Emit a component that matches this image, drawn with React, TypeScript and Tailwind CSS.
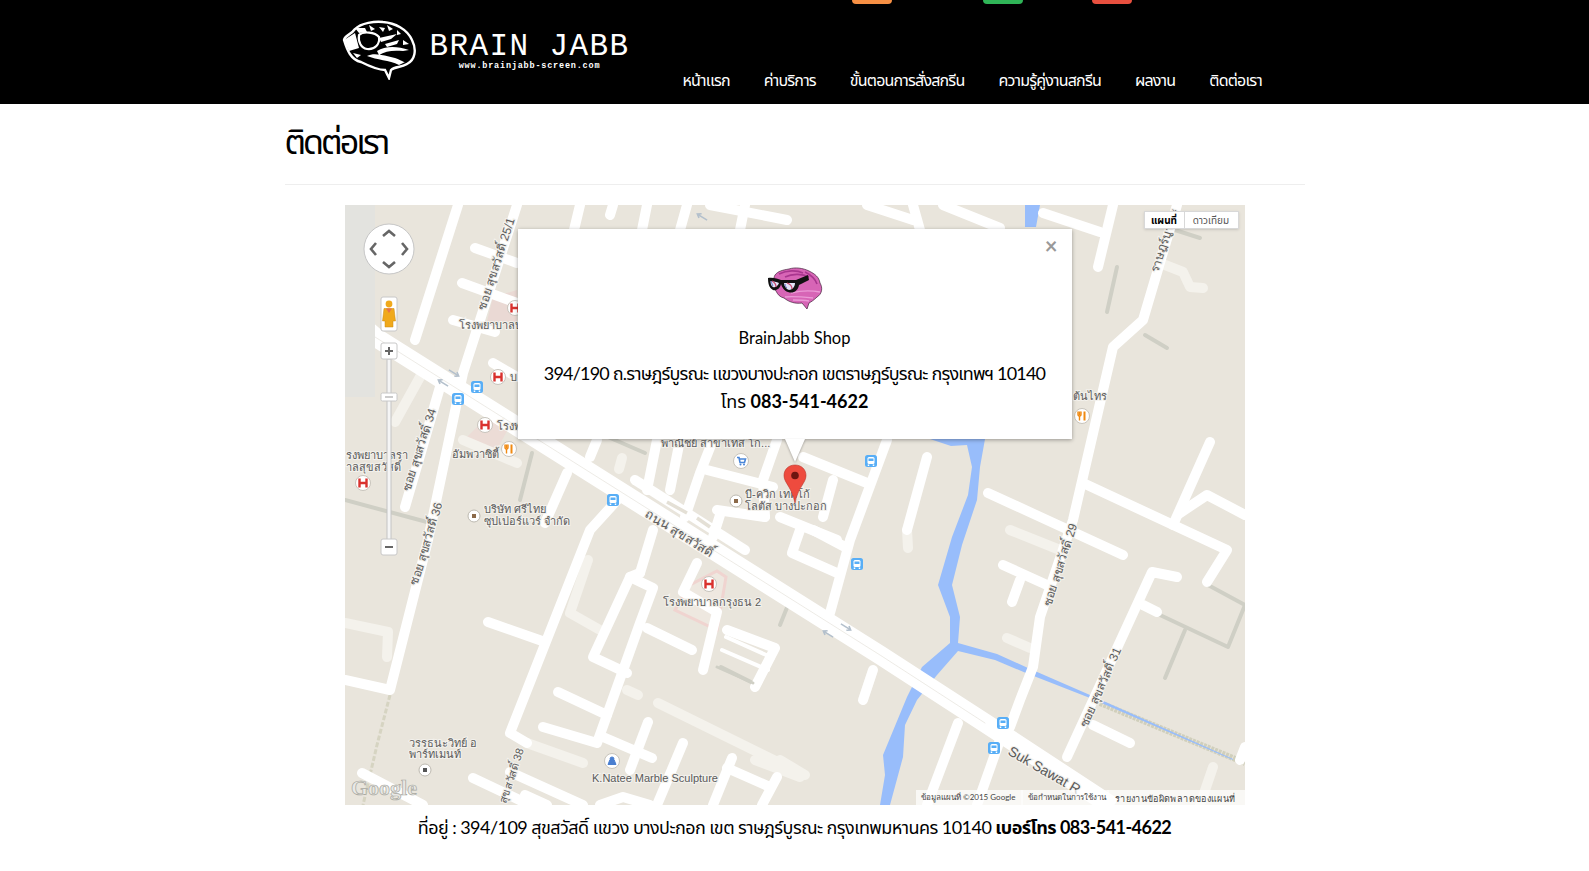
const UI = "font-['Lato','Noto_Sans','Noto_Sans_Thai','Liberation_Sans',sans-serif]";
const LABEL = "'Liberation Sans','DejaVu Sans','Noto Sans',sans-serif";
const UIF = "Lato,'Noto Sans',sans-serif";

type Line = [number, number][];
const toPts = (l: Line) => l.map((p) => p.join(",")).join(" ");

const whiteRoads: Line[] = [
  [[113, 0], [70, 135]],
  [[172, 0], [118, 168], [83, 335], [45, 485], [0, 475]],
  [[95, 182], [60, 302]],
  [[130, 43], [172, 58]],
  [[117, 78], [172, 98]],
  [[108, 115], [150, 127]],
  [[148, 158], [172, 172]],
  [[235, 0], [229, 25]],
  [[268, 0], [265, 10]],
  [[302, 0], [297, 25]],
  [[342, 0], [335, 25]],
  [[400, 0], [395, 25]],
  [[365, 0], [442, 15]],
  [[522, 0], [568, 15]],
  [[598, 0], [655, 23]],
  [[568, 0], [575, 25]],
  [[222, 268], [200, 318]],
  [[275, 292], [245, 325], [165, 528], [182, 538]],
  [[252, 235], [245, 252]],
  [[312, 235], [302, 285]],
  [[335, 235], [325, 285]],
  [[368, 235], [355, 268], [340, 312]],
  [[362, 265], [428, 282]],
  [[432, 235], [418, 275], [420, 312]],
  [[372, 305], [420, 312]],
  [[375, 310], [368, 332]],
  [[290, 275], [400, 345]],
  [[143, 417], [200, 437]],
  [[308, 325], [295, 368]],
  [[295, 368], [285, 372], [248, 452], [282, 468]],
  [[285, 372], [308, 383], [295, 418], [252, 538], [198, 522]],
  [[302, 423], [347, 445]],
  [[213, 487], [262, 510]],
  [[258, 532], [307, 553]],
  [[303, 517], [285, 565]],
  [[338, 538], [312, 600]],
  [[387, 553], [368, 600]],
  [[382, 563], [425, 582]],
  [[432, 572], [417, 600]],
  [[17, 568], [78, 600]],
  [[128, 573], [185, 600]],
  [[165, 567], [238, 600]],
  [[180, 590], [202, 600]],
  [[255, 600], [278, 592], [305, 600]],
  [[352, 358], [338, 387], [372, 407], [358, 465]],
  [[382, 425], [430, 443], [410, 482]],
  [[458, 252], [522, 278]],
  [[542, 235], [505, 335], [485, 408]],
  [[488, 275], [478, 312]],
  [[435, 312], [492, 335]],
  [[582, 252], [562, 325]],
  [[455, 325], [447, 348], [492, 368]],
  [[468, 325], [500, 342]],
  [[528, 465], [518, 495]],
  [[613, 518], [582, 600]],
  [[655, 535], [632, 600]],
  [[768, 0], [753, 62]],
  [[832, 0], [798, 115], [768, 142], [728, 315], [695, 412], [688, 462], [675, 495], [665, 522]],
  [[698, 8], [755, 27]],
  [[643, 288], [778, 350]],
  [[738, 278], [882, 345], [862, 377]],
  [[865, 237], [828, 320]],
  [[835, 308], [862, 290], [900, 310]],
  [[658, 360], [702, 380]],
  [[675, 375], [667, 397]],
  [[832, 372], [807, 367], [722, 552]],
  [[798, 400], [812, 407]],
  [[748, 520], [785, 538]],
  [[895, 555], [900, 542]],
];

const creamRoads: Line[] = [
  [[0, 418], [43, 427], [42, 452]],
  [[75, 172], [50, 217]],
  [[118, 235], [172, 258]],
  [[182, 538], [238, 558]],
  [[282, 485], [293, 490]],
  [[313, 498], [455, 568]],
  [[410, 555], [455, 572]],
  [[243, 355], [225, 408], [255, 425]],
  [[277, 253], [274, 264]],
  [[435, 555], [460, 570]],
  [[665, 325], [715, 345]],
  [[662, 433], [685, 443]],
  [[868, 562], [855, 600]],
  [[815, 58], [838, 67], [845, 82], [858, 83]],
  [[562, 325], [563, 343]],
];

const greyPaths: Line[] = [
  [[187, 248], [175, 295]],
  [[0, 295], [82, 317]],
  [[263, 232], [300, 248]],
  [[772, 62], [762, 107]],
  [[800, 130], [822, 143]],
  [[830, 25], [855, 33]],
  [[863, 380], [900, 400], [883, 442], [815, 410]],
  [[840, 425], [820, 473]],
  [[376, 462], [408, 478]],
  [[443, 400], [435, 420]],
];

function HMark({ x, y }: { x: number; y: number }) {
  return (
    <g transform={`translate(${x} ${y})`}>
      <circle r="7.5" fill="#fff" stroke="#c8c4bc" />
      <path d="M-3.5-4.5V4.5M3.5-4.5V4.5M-3.5 0H3.5" stroke="#d9322e" strokeWidth="2.4" fill="none" />
    </g>
  );
}

function Bus({ x, y }: { x: number; y: number }) {
  return (
    <g transform={`translate(${x} ${y})`}>
      <rect x="-6" y="-6" width="12" height="12" rx="2.5" fill="#58aef6" />
      <rect x="-3.5" y="-4" width="7" height="7" rx="1.5" fill="#fff" />
      <rect x="-2.5" y="-2.5" width="5" height="2.5" fill="#58aef6" />
      <path d="M-2.5 3.5V5M2.5 3.5V5" stroke="#fff" strokeWidth="1.5" />
    </g>
  );
}

function Fork({ x, y }: { x: number; y: number }) {
  return (
    <g transform={`translate(${x} ${y})`}>
      <circle r="7.5" fill="#fff" stroke="#c8c4bc" />
      <path d="M-2.5-4.5V-1M2.5-4.5V4.5" stroke="#f08a12" strokeWidth="2" fill="none" />
      <path d="M-4-4.5V-1.5C-4 0-2.5 0-2.5 0V4.5M-1-4.5V-1.5C-1 0-2.5 0-2.5 0" stroke="#f08a12" strokeWidth="1.4" fill="none" />
    </g>
  );
}

function Dot({ x, y, c = "#8b6a4a" }: { x: number; y: number; c?: string }) {
  return (
    <g transform={`translate(${x} ${y})`}>
      <circle r="6" fill="#fff" stroke="#bdb9b0" />
      <rect x="-2" y="-2" width="4" height="4" fill={c} />
    </g>
  );
}

function Arrow({ x, y, flip }: { x: number; y: number; flip?: boolean }) {
  return (
    <path
      transform={`translate(${x} ${y}) rotate(${flip ? 212 : 32})`}
      d="M-6 0H5M2-2.5 5.5 0 2 2.5"
      stroke="#b4c0cc"
      strokeWidth="1.6"
      fill="none"
    />
  );
}

function Label({ x, y, children, rot, size = 11, anchor = "start", fam = LABEL }: { x: number; y: number; children: string; rot?: number; size?: number; anchor?: "start" | "middle"; fam?: string }) {
  return (
    <text
      x={x}
      y={y}
      transform={rot !== undefined ? `rotate(${rot} ${x} ${y})` : undefined}
      fontSize={size}
      textAnchor={anchor}
      fill="#5a5a5a"
      stroke="#f3f1ec"
      strokeWidth="2.2"
      paintOrder="stroke"
      fontFamily={fam}
    >
      {children}
    </text>
  );
}

function MapDrawing() {
  return (
    <svg viewBox="0 0 900 600" className="block h-[600px] w-[900px]">
      <rect width="900" height="600" fill="#e9e5dc" />
      {/* water */}
      <path d="M755 498 820 525 900 558" stroke="#d0cfbb" strokeWidth="6" strokeDasharray="3 1" fill="none" />
      <path
        d="M680 0H695L691 22H680ZM585 234 606 241 622 240 627 262 623 290 607 332 593 380 605 412 605 438 577 462 562 492 538 550 540 570 535 600H545L558 552 560 520 572 495 592 470 613 446 650 455 681 468 745 493 888 555 888 554 745 490 683 463 652 449 613 438 615 412 607 380 617 340 632 295 635 262 640 234Z"
        fill="#98bdfb"
      />
      <path d="M45 490 32 540 18 600" stroke="#d6d4c2" strokeWidth="3" strokeDasharray="5 2" fill="none" />
      {/* hospital grounds */}
      <path d="M148 92 172 85V122L142 116Z" fill="#ead9d4" />
      <path d="M122 232 142 212 162 226 150 248Z" fill="#ecdcd6" />
      <path d="M372 366 381 372 372 425 330 405 345 380Z" fill="#eee8e0" stroke="#f0d4d0" strokeWidth="3" />
      <g fill="none" strokeLinecap="round" strokeLinejoin="round">
        {greyPaths.map((l, i) => (
          <polyline key={i} points={toPts(l)} stroke="#cfcfc5" strokeWidth="4" />
        ))}
        {creamRoads.map((l, i) => (
          <polyline key={i} points={toPts(l)} stroke="#f4f2ec" strokeWidth="10" />
        ))}
        {whiteRoads.map((l, i) => (
          <polyline key={i} points={toPts(l)} stroke="#fff" strokeWidth="10" />
        ))}
        {/* thin lanes near the hospital */}
        <path d="M381 432 428 453M377 445 423 465" stroke="#fff" strokeWidth="4" />
        <path d="M372 462 408 478" stroke="#cfcfc5" strokeWidth="3" />
        <polyline points="0,106 30,132 535,450 640,518 768,602" stroke="#fff" strokeWidth="19" strokeLinecap="butt" />
        <polyline points="30,132 535,450 640,518" stroke="#e9e6df" strokeWidth="0.8" />
        <path d="M322 297 342 308M352 313 365 322" stroke="#e4e0d6" strokeWidth="3.5" strokeLinecap="butt" />
      </g>
      {/* left strip */}
      <rect width="30" height="192" fill="#e3e3df" />

      <Arrow x={109} y={168} />
      <Arrow x={98} y={178} flip />
      <Arrow x={501} y={422} />
      <Arrow x={483} y={429} flip />
      <Arrow x={357} y={12} flip />

      <Label x={114} y={124}>โรงพยาบาลบ</Label>
      <Label x={155} y={60} rot={-72} anchor="middle" size={12}>ซอย สุขสวัสดิ์ 25/1</Label>
      <Label x={78} y={246} rot={-72} anchor="middle" size={12}>ซอย สุขสวัสดิ์ 34</Label>
      <Label x={85} y={340} rot={-73} anchor="middle" size={12}>ซอย สุขสวัสดิ์ 36</Label>
      <Label x={170} y={572} rot={-72} anchor="middle" size={11}>สุขสวัสดิ์ 38</Label>
      <Label x={719} y={361} rot={-72} anchor="middle" size={12}>ซอย สุขสวัสดิ์ 29</Label>
      <Label x={759} y={484} rot={-66} anchor="middle" size={12}>ซอย สุขสวัสดิ์ 31</Label>
      <Label x={823} y={37} rot={-72} anchor="middle" size={12}>ราษฎร์บูรณะ</Label>
      <Label x={332} y={332} rot={32} anchor="middle" size={13}>ถนน สุขสวัสดิ์</Label>
      <Label x={662} y={549} rot={30} size={14}>Suk Sawat R</Label>
      <Label x={107} y={253}>อัมพวาซิตี้</Label>
      <Label x={1} y={254}>รงพยาบาลรา</Label>
      <Label x={1} y={266}>าลสุขสวัสดิ์</Label>
      <Label x={152} y={225}>โรงพ</Label>
      <Label x={165} y={176}>บ</Label>
      <Label x={139} y={308}>บริษัท ศรีไทย</Label>
      <Label x={139} y={320}>ซุปเปอร์แวร์ จำกัด</Label>
      <Label x={400} y={293}>บี-ควิก เทคโก้</Label>
      <Label x={400} y={305}>โลตัส บางปะกอก</Label>
      <Label x={316} y={242}>พาณิชย์ สาขาเทส โก...</Label>
      <Label x={318} y={401}>โรงพยาบาลกรุงธน 2</Label>
      <Label x={247} y={577} size={11}>K.Natee Marble Sculpture</Label>
      <Label x={64} y={542}>วรรธนะวิทย์ อ</Label>
      <Label x={64} y={553}>พาร์ทเมนท์</Label>
      <Label x={728} y={195}>ต้นไทร</Label>

      <HMark x={170} y={103} />
      <HMark x={153} y={172} />
      <HMark x={140} y={220} />
      <HMark x={18} y={278} />
      <HMark x={364} y={379} />
      <Fork x={164} y={244} />
      <Fork x={737} y={211} />
      <Bus x={132} y={182} />
      <Bus x={113} y={194} />
      <Bus x={268} y={295} />
      <Bus x={526} y={256} />
      <Bus x={512} y={359} />
      <Bus x={658} y={518} />
      <Bus x={649} y={543} />
      <Dot x={129} y={311} />
      <Dot x={391} y={296} />
      <Dot x={80} y={565} c="#555" />
      <g transform="translate(396 256)">
        <circle r="7.5" fill="#fff" stroke="#c8c4bc" />
        <path d="M-4-3.5H-2L-1 1.5H3.5L4.5-2H-1.5" stroke="#4a86d8" strokeWidth="1.6" fill="none" />
        <circle cx="-0.5" cy="3.5" r="1" fill="#4a86d8" />
        <circle cx="3" cy="3.5" r="1" fill="#4a86d8" />
      </g>
      <g transform="translate(267 556)">
        <circle r="7.5" fill="#fff" stroke="#c8c4bc" />
        <path d="M-4 3.5H4L2-1.5H-2ZM-2-2A2 2 0 0 1 2-2" fill="#4a7fd0" stroke="#4a7fd0" />
      </g>
      {/* pin */}
      <g transform="translate(439 260)">
        <path d="M11 0C4.5 0 0 4.5 0 10.5C0 18 8 22 11 38C14 22 22 18 22 10.5C22 4.5 17.5 0 11 0Z" fill="#ee4b3e" stroke="#b8362c" strokeWidth="0.6" />
        <circle cx="11" cy="10.5" r="3.8" fill="#6e1510" />
      </g>
      <text x="6" y="590" fontSize="22" fontWeight="700" fill="#e9e9e6" stroke="#a8a8a0" strokeWidth="0.7" fontFamily="'Liberation Serif',serif">Google</text>

      {/* attribution */}
      <rect x="571" y="585" width="329" height="15" fill="#fff" opacity="0.72" />
      <path d="M677 585V600M763 585V600" stroke="#fff" />
      <text x="576" y="595" fontSize="8" fill="#444" fontFamily={UIF}>ข้อมูลแผนที่ ©2015 Google</text>
      <text x="683" y="595" fontSize="8" fill="#444" fontFamily={UIF}>ข้อกำหนดในการใช้งาน</text>
      <text x="770" y="597" fontSize="9" fill="#444" fontFamily={LABEL} letterSpacing="0.35">รายงานข้อผิดพลาดของแผนที่</text>

      {/* pan control */}
      <circle cx="44" cy="44" r="25" fill="#fff" stroke="#c6c6c6" />
      <path d="M38 31 44 26 50 31M38 57 44 62 50 57M31 38 26 44 31 50M57 38 62 44 57 50" stroke="#666" strokeWidth="2.6" fill="none" />
      {/* pegman */}
      <rect x="36" y="92" width="16" height="34" rx="2" fill="#fff" stroke="#c8c8c8" />
      <circle cx="44" cy="99" r="3.4" fill="#f0a91b" />
      <path d="M39 103.5H49L50.5 116H48V122H40V116H37.5Z" fill="#f0a91b" stroke="#c98a10" strokeWidth="0.5" />
      <path d="M41 103.5H47L44 108Z" fill="#e8724a" />
      {/* zoom */}
      <rect x="42" y="154" width="4" height="182" fill="#f5f5f5" stroke="#c4c4c4" />
      <rect x="36" y="138" width="16" height="16" rx="2" fill="#fff" stroke="#c8c8c8" />
      <path d="M40 146H48M44 142V150" stroke="#666" strokeWidth="2" />
      <rect x="36" y="188" width="16" height="8" rx="1.5" fill="#fff" stroke="#c8c8c8" />
      <path d="M40 192H48" stroke="#999" strokeWidth="1" />
      <rect x="36" y="334" width="16" height="16" rx="2" fill="#fff" stroke="#c8c8c8" />
      <path d="M40 342H48" stroke="#666" strokeWidth="2" />
    </svg>
  );
}

function BrainLogo() {
  return (
    <svg viewBox="0 0 76 60" className="h-[60px] w-[78px] shrink-0">
      <path d="M3 20C4 15 10 15 14 9C20 3 34 1 42 2C54 3 66 9 71 20C76 30 74 40 66 44C60 48 54 46 50 50L48 58L44 50C36 50 28 46 20 42C10 40 6 30 3 20Z" fill="none" stroke="#fff" strokeWidth="2.4" />
      <path d="M3 20 14 13 18 28 8 31Z" fill="#fff" />
      <path d="M18 15C22 11 34 12 38 17C39 24 34 30 26 29C20 28 17 22 18 15Z" fill="#000" stroke="#fff" strokeWidth="2.2" />
      <path d="M14 8H24L26 12 18 13ZM28 5 34 9 30 11ZM38 7 44 8 42 12ZM38 18 56 14 50 19 40 22ZM46 5 52 9 48 11ZM56 10 60 14 56 15ZM36 31C44 26 56 26 68 30L62 31C52 30 44 31 38 35ZM26 36C34 32 44 36 54 38C60 40 62 42 64 42L58 45C48 40 36 40 26 36ZM62 20 68 24 62 25ZM44 24 58 20 56 24 46 27ZM12 33 20 35 16 38Z" fill="#fff" />
    </svg>
  );
}

function PinkBrain() {
  return (
    <svg viewBox="0 0 56 44" className="h-[44px] w-[56px]">
      <path d="M8 9C11 5 16 4 22 3C28 1 36 2 42 5C48 8 52 11 53 17C56 22 55 28 50 31C47 34 44 36 42 37L40 43L35 37C28 38 22 36 17 32C13 31 11 29 9 25C5 20 6 13 8 9Z" fill="#d765b6" stroke="#40203a" strokeWidth="0.7" />
      <path d="M12 8C20 4 30 4 36 7M18 11C26 7 36 8 42 11M38 6C44 9 48 12 50 18" stroke="#a9368f" strokeWidth="1.6" fill="none" />
      <path d="M24 27C32 25 42 24 53 26M18 31C26 30 36 31 46 32M26 34C32 34 36 34 42 35" stroke="#eb9ad6" strokeWidth="1.4" fill="none" />
      <path d="M1 12C6 11 11 13 14 14L29 14 41 9 42 14 32 19C31 25 26 28 21 26C17 25 15 21 14 18C13 23 9 25 6 24C2 22 1 17 1 12Z" fill="#111" />
      <path d="M3.5 15C6 15 10 16 12 17C11 20 8 22 6 21C4 20 3.5 18 3.5 15ZM17 17 28 17C28 21 25 24 22 24C19 23 17 20 17 17Z" fill="#e3e5f8" />
      <path d="M5 15C7 16 9 18 9 21M20 17C23 18 25 20 25 23" stroke="#c8496e" strokeWidth="1.3" fill="none" />
      <path d="M4 15C5 17 5 19 6 20M18 18C18 20 19 21 20 22" stroke="#5a6cc4" strokeWidth="1" fill="none" />
    </svg>
  );
}

const navItems = ["หน้าแรก", "ค่าบริการ", "ขั้นตอนการสั่งสกรีน", "ความรู้คู่งานสกรีน", "ผลงาน", "ติดต่อเรา"];

export default function App() {
  return (
    <div className={`min-h-[871px] bg-white text-black ${UI}`}>
      <header className="h-[104px] bg-black">
        <div className="mx-auto w-[1020px]">
          <div className="flex h-1 pl-[567px]">
            <div className="h-1 w-10 rounded-b bg-[#f79044]" />
            <div className="ml-[91px] h-1 w-10 rounded-b bg-[#2fb457]" />
            <div className="ml-[69px] h-1 w-10 rounded-b bg-[#e8503f]" />
          </div>
          <div className="flex items-start pl-[55px] pt-4">
            <BrainLogo />
            <div className="ml-[13px] flex w-[198px] shrink-0 flex-col items-center whitespace-nowrap pt-[12px] font-['Liberation_Mono',monospace] text-white">
              <span className="text-[31px] leading-[30px] tracking-[1.4px]">BRAIN JABB</span>
              <span className="-mt-px text-[8.5px] font-bold leading-[10px] tracking-[0.8px]">www.brainjabb-screen.com</span>
            </div>
            <nav className="ml-[54px] flex gap-[34px] whitespace-nowrap pt-[48px] text-[16px] leading-6 tracking-[-0.8px] text-white">
              {navItems.map((t) => (
                <a key={t}>{t}</a>
              ))}
            </nav>
          </div>
        </div>
      </header>
      <main className="mx-auto w-[1020px]">
        <div className="border-b border-[#eeeeee] pb-[19px] pt-[13px]">
          <h1 className="text-[34px] font-normal leading-[48px] tracking-[-3px]">ติดต่อเรา</h1>
        </div>
        <div className="relative mx-auto mt-5 h-[600px] w-[900px] overflow-hidden">
          <MapDrawing />
          <div className="absolute right-[6px] top-[6px] flex h-[18px] border border-[#d8d8d8] bg-white text-[10px] leading-[16px] shadow-sm">
            <span className="w-[39px] text-center font-bold text-black">แผนที่</span>
            <span className="w-[54px] border-l border-[#d8d8d8] text-center text-[#555]">ดาวเทียม</span>
          </div>
          <div className="absolute left-[173px] top-6 flex h-[210px] w-[554px] flex-col items-center bg-white shadow-[0_1px_4px_rgba(0,0,0,0.35)]">
            <span className="absolute right-[14px] top-[5px] text-[22px] font-bold leading-6 text-[#999]">×</span>
            <div className="mt-[37px]">
              <PinkBrain />
            </div>
            <p className="mt-[16px] text-[16.5px] leading-6">BrainJabb Shop</p>
            <p className="mt-[11px] whitespace-nowrap text-[18px] leading-6 tracking-[-0.8px]">394/190 ถ.ราษฎร์บูรณะ แขวงบางปะกอก เขตราษฎร์บูรณะ กรุงเทพฯ 10140</p>
            <p className="mt-1 text-[18px] leading-6">
              โทร <b>083-541-4622</b>
            </p>
            <div className="absolute left-[267px] top-full h-0 w-0 border-x-[10px] border-t-[23px] border-x-transparent border-t-white drop-shadow-[0_1px_1px_rgba(0,0,0,0.3)]" />
          </div>
        </div>
        <p className="mt-[10px] text-center text-[18px] leading-6 tracking-[-0.55px]">
          ที่อยู่ : 394/109 สุขสวัสดิ์ แขวง บางปะกอก เขต ราษฎร์บูรณะ กรุงเทพมหานคร 10140 <b>เบอร์โทร 083-541-4622</b>
        </p>
      </main>
    </div>
  );
}
